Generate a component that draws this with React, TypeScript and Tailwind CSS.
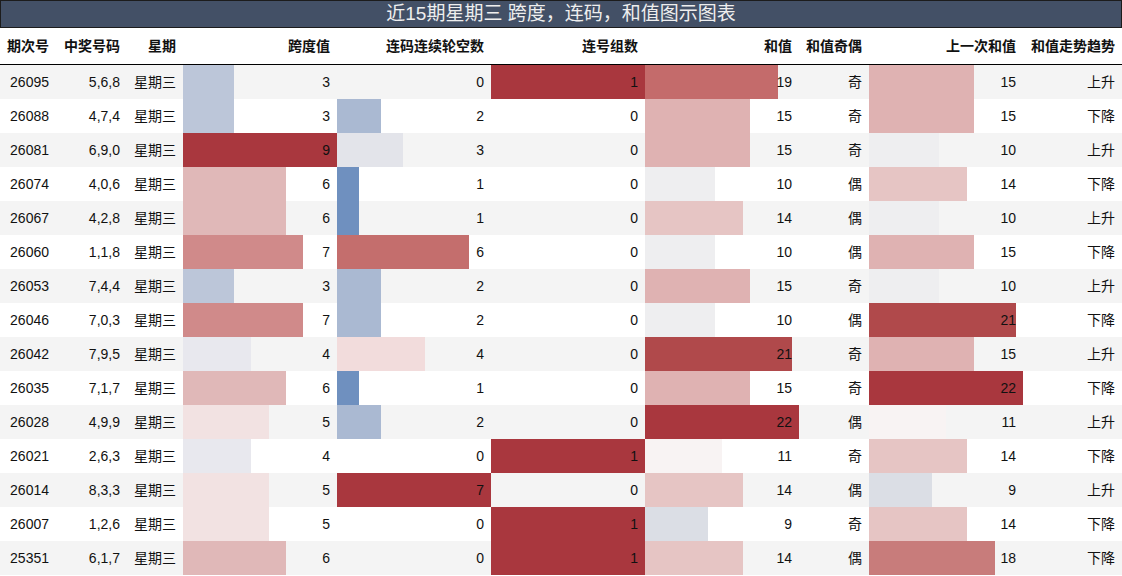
import React from "react";

type Row = {
  id: string;
  nums: string;
  span: number;
  gap: number;
  groups: number;
  sum: number;
  parity: string;
  prev: number;
  trend: string;
};

const rows: Row[] = [
  { id: "26095", nums: "5,6,8", span: 3, gap: 0, groups: 1, sum: 19, parity: "奇", prev: 15, trend: "上升" },
  { id: "26088", nums: "4,7,4", span: 3, gap: 2, groups: 0, sum: 15, parity: "奇", prev: 15, trend: "下降" },
  { id: "26081", nums: "6,9,0", span: 9, gap: 3, groups: 0, sum: 15, parity: "奇", prev: 10, trend: "上升" },
  { id: "26074", nums: "4,0,6", span: 6, gap: 1, groups: 0, sum: 10, parity: "偶", prev: 14, trend: "下降" },
  { id: "26067", nums: "4,2,8", span: 6, gap: 1, groups: 0, sum: 14, parity: "偶", prev: 10, trend: "上升" },
  { id: "26060", nums: "1,1,8", span: 7, gap: 6, groups: 0, sum: 10, parity: "偶", prev: 15, trend: "下降" },
  { id: "26053", nums: "7,4,4", span: 3, gap: 2, groups: 0, sum: 15, parity: "奇", prev: 10, trend: "上升" },
  { id: "26046", nums: "7,0,3", span: 7, gap: 2, groups: 0, sum: 10, parity: "偶", prev: 21, trend: "下降" },
  { id: "26042", nums: "7,9,5", span: 4, gap: 4, groups: 0, sum: 21, parity: "奇", prev: 15, trend: "上升" },
  { id: "26035", nums: "7,1,7", span: 6, gap: 1, groups: 0, sum: 15, parity: "奇", prev: 22, trend: "下降" },
  { id: "26028", nums: "4,9,9", span: 5, gap: 2, groups: 0, sum: 22, parity: "偶", prev: 11, trend: "上升" },
  { id: "26021", nums: "2,6,3", span: 4, gap: 0, groups: 1, sum: 11, parity: "奇", prev: 14, trend: "下降" },
  { id: "26014", nums: "8,3,3", span: 5, gap: 7, groups: 0, sum: 14, parity: "偶", prev: 9, trend: "上升" },
  { id: "26007", nums: "1,2,6", span: 5, gap: 0, groups: 1, sum: 9, parity: "奇", prev: 14, trend: "下降" },
  { id: "25351", nums: "6,1,7", span: 6, gap: 0, groups: 1, sum: 14, parity: "偶", prev: 18, trend: "下降" },
];

// colour of each bar, per column, by value
const spanColor: Record<number, string> = {
  3: "bg-[#bcc6d9]",
  4: "bg-[#e8e8ee]",
  5: "bg-[#f2e2e2]",
  6: "bg-[#e0b8b8]",
  7: "bg-[#d08a8a]",
  9: "bg-[#a9373e]",
};

const gapColor: Record<number, string> = {
  1: "bg-[#6f90bf]",
  2: "bg-[#aab9d2]",
  3: "bg-[#e3e4ea]",
  4: "bg-[#f2dcdc]",
  6: "bg-[#c46e6d]",
  7: "bg-[#a9373e]",
};

const sumColor: Record<number, string> = {
  9: "bg-[#dbdee5]",
  10: "bg-[#eeeef0]",
  11: "bg-[#f8f3f3]",
  14: "bg-[#e6c5c4]",
  15: "bg-[#dfb2b2]",
  18: "bg-[#c87c7b]",
  19: "bg-[#c46b6b]",
  21: "bg-[#b0494b]",
  22: "bg-[#a9373e]",
};

const grid =
  "grid grid-cols-[56px_71px_56px_154px_154px_154px_154px_70px_154px_99px]";

const Cell = ({ children }: { children: React.ReactNode }) => (
  <div className="h-[34px] leading-[34px] text-right pr-[7px] whitespace-nowrap">{children}</div>
);

const BarCell = ({ value, max, color }: { value: number; max: number; color?: string }) => (
  <div className="relative h-[34px]">
    {value > 0 && (
      <div className={`absolute left-0 top-0 bottom-0 ${color}`} style={{ width: `${(value / max) * 100}%` }} />
    )}
    <div className="relative h-[34px] leading-[34px] text-right pr-[7px]">{value}</div>
  </div>
);

const headers = ["期次号", "中奖号码", "星期", "跨度值", "连码连续轮空数", "连号组数", "和值", "和值奇偶", "上一次和值", "和值走势趋势"];

export default function App() {
  return (
    <div className="w-[1122px] h-[576px] bg-white overflow-hidden text-[14px] text-[#111] font-['Liberation_Sans','Noto_Sans_CJK_SC',sans-serif]">
      <div className="h-[28px] bg-[#435066] border border-[#1c1c1c] text-[#eeeeee] text-[19px] leading-[26px] text-center">
        近15期星期三 跨度，连码，和值图示图表
      </div>
      <div className={`${grid} h-[37px] border-b border-black font-bold`}>
        {headers.map((h) => (
          <div key={h} className="h-[36px] leading-[36px] text-right pr-[7px] whitespace-nowrap">
            {h}
          </div>
        ))}
      </div>
      {rows.map((r, i) => (
        <div key={r.id} className={`${grid} ${i % 2 === 0 ? "bg-[#f4f4f4]" : "bg-white"}`}>
          <Cell>{r.id}</Cell>
          <Cell>{r.nums}</Cell>
          <Cell>星期三</Cell>
          <BarCell value={r.span} max={9} color={spanColor[r.span]} />
          <BarCell value={r.gap} max={7} color={gapColor[r.gap]} />
          <BarCell value={r.groups} max={1} color="bg-[#a9373e]" />
          <BarCell value={r.sum} max={22} color={sumColor[r.sum]} />
          <Cell>{r.parity}</Cell>
          <BarCell value={r.prev} max={22} color={sumColor[r.prev]} />
          <Cell>{r.trend}</Cell>
        </div>
      ))}
    </div>
  );
}
